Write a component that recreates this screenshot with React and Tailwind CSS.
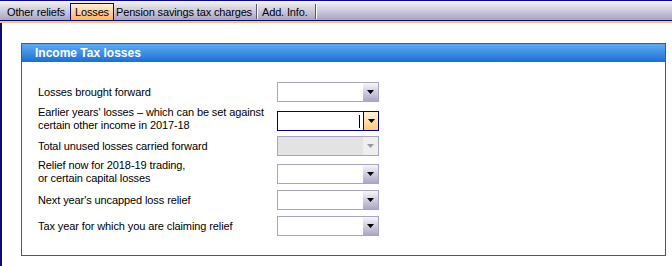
import { useState } from 'react';

const rows = [
  { label: ['Losses brought forward'], gap: 'mt-0', state: 'normal' },
  { label: ["Earlier years' losses \u2013 which can be set against", 'certain other income in 2017-18'], gap: 'mt-[9px]', state: 'focus' },
  { label: ['Total unused losses carried forward'], gap: 'mt-[5px]', state: 'disabled' },
  { label: ['Relief now for 2018-19 trading,', 'or certain capital losses'], gap: 'mt-[8px]', state: 'normal' },
  { label: ["Next year's uncapped loss relief"], gap: 'mt-[6px]', state: 'normal' },
  { label: ['Tax year for which you are claiming relief'], gap: 'mt-[6px]', state: 'normal' },
];

function Arrow({ color }) {
  return (
    <svg width="7" height="4" viewBox="0 0 7 4">
      <path d="M0 0H7L3.5 4Z" fill={color} />
    </svg>
  );
}

function Combo({ state }) {
  if (state === 'disabled') {
    return (
      <div className="flex h-[20px] w-[102px] border border-[#a7a3c1] bg-[#e3e3e3]">
        <div className="flex-1" />
        <div className="flex w-[15px] items-center justify-center bg-[#efefef]">
          <Arrow color="#9a9a9a" />
        </div>
      </div>
    );
  }
  if (state === 'focus') {
    return (
      <div className="flex h-[20px] w-[102px] border border-[#000080] bg-white">
        <div className="flex flex-1 items-center justify-end pr-[3px]">
          <div className="h-[13px] w-px bg-black" />
        </div>
        <div className="flex w-[15px] items-center justify-center border-l border-[#000080] bg-gradient-to-b from-[#fff3dc] to-[#ffc978]">
          <Arrow color="#000" />
        </div>
      </div>
    );
  }
  return (
    <div className="flex h-[20px] w-[102px] border border-[#a7a3c1] bg-white">
      <div className="flex-1" />
      <div className="flex w-[15px] items-center justify-center bg-gradient-to-b from-[#f6f6f9] to-[#aba7c5]">
        <Arrow color="#000" />
      </div>
    </div>
  );
}

function Separator() {
  return (
    <div className="flex h-[15px] self-end mb-[1px]">
      <div className="w-px bg-[#55557a]" />
      <div className="w-px bg-white" />
    </div>
  );
}

export default function App() {
  const [active] = useState('Losses');

  return (
    <div className="h-[266px] w-[672px] overflow-hidden bg-white font-['Liberation_Sans',Arial,sans-serif] text-[11px] text-black">
      {/* tab strip */}
      <div className="flex h-[20px] items-end whitespace-nowrap border-t border-[#0a0a78] bg-gradient-to-b from-[#f3f2f8] to-[#a8a4c4] pr-[2px] tracking-[-0.15px]">
        <div className="h-[17px] w-[70px] pl-[7px] pt-[3px] leading-[13px]">Other reliefs</div>
        <div
          className={
            active === 'Losses'
              ? 'h-[17px] w-[44px] border-x border-t border-[#0a0a78] bg-gradient-to-b from-[#ffeedb] to-[#ffb25f] pt-[2px] text-center leading-[13px]'
              : 'h-[17px] w-[44px] pt-[3px] text-center leading-[13px]'
          }
        >
          Losses
        </div>
        <div className="h-[17px] w-[142px] pl-[2px] pt-[3px] leading-[13px]">Pension savings tax charges</div>
        <Separator />
        <div className="h-[17px] w-[57px] pl-[4px] pt-[3px] leading-[13px]">Add. Info.</div>
        <Separator />
      </div>
      <div className="h-px bg-[#0a0a78]" />
      <div className="h-[2px] bg-[#f7c57c]" />

      {/* page body */}
      <div className="h-[243px] border-l-2 border-[#0a0a78] pl-[19px] pr-[6px] pt-[20px]">
        <div className="border border-[#1d62c2] bg-white">
          <div className="h-[18px] bg-gradient-to-b from-[#5eacf3] to-[#1b6fcf] pl-[13px] text-[12px] font-bold leading-[18px] text-white">
            Income Tax losses
          </div>
          <div className="pb-[19px] pl-[16px] pt-[20px] tracking-[-0.1px]">
            {rows.map((r) => (
              <div key={r.label[0]} className={`flex h-[20px] items-center ${r.gap}`}>
                <div className={`w-[239px] leading-[13px] ${r.label.length > 1 ? 'mb-[4px]' : ''}`}>
                  {r.label.map((l) => (
                    <div key={l} className="whitespace-nowrap">{l}</div>
                  ))}
                </div>
                <Combo state={r.state} />
              </div>
            ))}
          </div>
        </div>
      </div>
    </div>
  );
}
